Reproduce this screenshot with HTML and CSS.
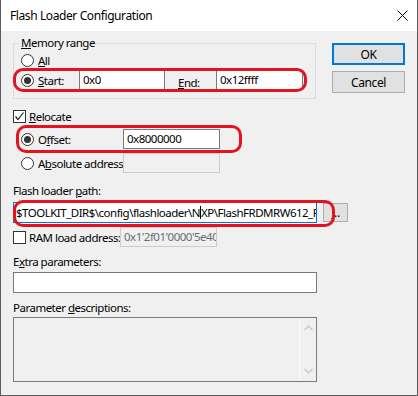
FILE: index.html
```html
<!DOCTYPE html>
<html lang="en">
<head>
    <meta charset="UTF-8">
    <title>Flash Loader Configuration</title>
    <link rel="stylesheet" href="styles.css">
</head>
<body>
    <div class="dialog">
        <div class="titlebar">
            <span class="title">Flash Loader Configuration</span>
            <svg class="close" width="11" height="11" viewBox="0 0 11 11">
                <path d="M0.5 0.5 L10.5 10.5 M10.5 0.5 L0.5 10.5" stroke="#000" stroke-width="1" fill="none"/>
            </svg>
        </div>

        <div class="content">
            <div class="top">
                <fieldset class="group">
                    <legend><u>M</u>emory range</legend>
                    <div class="row all-row">
                        <span class="radio"></span>
                        <span><u>A</u>ll</span>
                    </div>
                    <div class="row range-row mark">
                        <span class="opt start-opt"><span class="radio checked"></span><span><u>S</u>tart:</span></span>
                        <div class="field start-field">0x0</div>
                        <span class="end-label"><u>E</u>nd:</span>
                        <div class="field end-field">0x12ffff</div>
                    </div>
                </fieldset>
                <div class="side">
                    <button class="btn default">OK</button>
                    <button class="btn">Cancel</button>
                </div>
            </div>

            <div class="row check-row relocate-row">
                <span class="check checked">
                    <svg width="11" height="11" viewBox="0 0 11 11"><path d="M1.5 5.5 L4 8.5 L9.5 1.5" stroke="#222" stroke-width="1.2" fill="none"/></svg>
                </span>
                <span><u>R</u>elocate</span>
            </div>
            <div class="row sub-row offset-row mark">
                <span class="opt wide-opt"><span class="radio checked"></span><span>O<u>f</u>fset:</span></span>
                <div class="field">0x8000000</div>
            </div>
            <div class="row sub-row abs-row">
                <span class="opt wide-opt"><span class="radio"></span><span>A<u>b</u>solute address:</span></span>
                <div class="field disabled"></div>
            </div>

            <div class="label path-label">Flash loader <u>p</u>ath:</div>
            <div class="row path-row mark">
                <div class="field focus path-field">$TOOLKIT_DIR$\config\flashloader\N<span class="caret"></span>XP\FlashFRDMRW612_Flash</div>
                <button class="btn small"><u>.</u>..</button>
            </div>
            <div class="row ram-row">
                <span class="opt ram-opt">
                    <span class="check"></span>
                    <span>RAM load address:</span>
                </span>
                <div class="field disabled">0x1'2f01'0000'5e40</div>
            </div>

            <div class="label extra-label">E<u>x</u>tra parameters:</div>
            <div class="field full"></div>

            <div class="label desc-label">Parameter <u>d</u>escriptions:</div>
            <div class="memo">
                <div class="memo-text"></div>
                <div class="scroll">
                    <svg width="9" height="6" viewBox="0 0 9 6"><path d="M0.5 5 L4.5 1 L8.5 5" stroke="#c4c4c4" stroke-width="1.2" fill="none"/></svg>
                    <svg width="9" height="6" viewBox="0 0 9 6"><path d="M0.5 1 L4.5 5 L8.5 1" stroke="#c4c4c4" stroke-width="1.2" fill="none"/></svg>
                </div>
            </div>
        </div>
    </div>
</body>
</html>
```

FILE: styles.css
```css
*{
    margin: 0;
    padding: 0;
    box-sizing: border-box;
}
body{
    background-color: #ffffff;
    font-family: "Segoe UI", "Noto Sans", sans-serif;
    font-size: 11.5px;
    letter-spacing: -0.5px;
    white-space: nowrap;
    color: #000000;
}
.dialog{
    width: 418px;
    height: 396px;
    background-color: #f0f0f0;
    border: 1px solid #5c5c5c;
    border-top: none;
}
.titlebar{
    height: 31px;
    background-color: #ffffff;
    display: flex;
    align-items: center;
    justify-content: space-between;
    padding: 0 9px 0 9px;
    font-size: 12px;
    letter-spacing: -0.4px;
}
.content{
    padding: 4px 12px 0 12px;
}
.top{
    display: flex;
    align-items: flex-start;
}
.group{
    width: 303px;
    border: 1px solid #dcdcdc;
    padding: 0 0 6px 0;
}
.group legend{
    margin-left: 5px;
    padding: 0 2px;
    line-height: 16px;
}
.row{
    display: flex;
    align-items: center;
}
.all-row{
    height: 15px;
    margin-top: 2px;
    padding-left: 7px;
    gap: 4px;
}
.range-row{
    height: 24px;
    padding-left: 7px;
}
.opt{
    display: flex;
    align-items: center;
    gap: 4px;
}
.start-opt{
    width: 58px;
}
.wide-opt{
    width: 102px;
}
.radio{
    width: 13px;
    height: 13px;
    border: 1px solid #333333;
    border-radius: 50%;
    background-color: #ffffff;
    display: flex;
    align-items: center;
    justify-content: center;
    flex-shrink: 0;
}
.radio.checked::before{
    content: "";
    width: 7px;
    height: 7px;
    border-radius: 50%;
    background-color: #333333;
}
.check{
    width: 13px;
    height: 13px;
    border: 1px solid #333333;
    background-color: #ffffff;
    display: flex;
    align-items: center;
    justify-content: center;
    flex-shrink: 0;
}
.field{
    height: 20px;
    border: 1px solid #7a7a7a;
    background-color: #ffffff;
    padding: 0 3px;
    line-height: 18px;
    overflow: hidden;
    flex-shrink: 0;
}
.start-field{
    width: 86px;
}
.end-label{
    width: 51px;
    padding-left: 13px;
    padding-top: 4px;
    align-self: stretch;
    display: flex;
    align-items: center;
}
.end-field{
    width: 87px;
}
.field.disabled{
    border-color: #cccccc;
    background-color: #f0f0f0;
    color: #6d6d6d;
    width: 97px;
}
.field.focus{
    border-color: #0078d7;
}
.side{
    margin-left: 16px;
    margin-top: 8px;
    width: 73px;
    display: flex;
    flex-direction: column;
    gap: 6px;
}
.btn{
    font-family: inherit;
    font-size: 12px;
    letter-spacing: -0.4px;
    color: #000000;
    background-color: #e1e1e1;
    border: 1px solid #adadad;
    width: 73px;
    height: 22px;
}
.btn.default{
    border: 2px solid #0078d7;
}
.check-row{
    gap: 3px;
}
.relocate-row{
    margin-top: 10px;
    height: 15px;
}
.sub-row{
    width: 207px;
    height: 20px;
    padding-left: 8px;
}
.offset-row{
    margin-top: 5px;
}
.offset-row .field{
    width: 97px;
}
.abs-row{
    margin-top: 4px;
}
.label{
    height: 16px;
    line-height: 16px;
}
.path-label{
    margin-top: 10px;
}
.path-row{
    width: 335px;
    margin-top: 3px;
}
.path-field{
    width: 304px;
    height: 21px;
    line-height: 19px;
    padding: 0 2px;
}
.caret{
    display: inline-block;
    width: 1px;
    height: 13px;
    background-color: #000000;
    vertical-align: -2px;
}
.btn.small{
    width: 25px;
    height: 19px;
    margin-left: 6px;
    line-height: 14px;
    flex-shrink: 0;
}
.ram-row{
    margin-top: 4px;
    height: 20px;
}
.ram-opt{
    width: 107px;
    gap: 3px;
}
.extra-label{
    margin-top: 7px;
}
.field.full{
    margin-top: 2px;
    width: 304px;
    height: 21px;
}
.desc-label{
    margin-top: 7px;
}
.memo{
    margin-top: 1px;
    width: 304px;
    height: 65px;
    border: 1px solid #7a7a7a;
    display: flex;
}
.memo-text{
    flex: 1;
}
.scroll{
    width: 17px;
    border-left: 1px solid #fbfbfb;
    display: flex;
    flex-direction: column;
    justify-content: space-between;
    align-items: center;
    padding: 7px 0 7px 0;
}

/* red annotation frames drawn over the controls */
.mark{
    position: relative;
}
.mark::after{
    content: "";
    position: absolute;
    border: 3px solid #e3131f;
    border-radius: 10px;
    pointer-events: none;
}
.range-row::after{
    top: 0;
    bottom: 0;
    left: -1px;
    right: 8px;
}
.offset-row::after{
    top: -4px;
    bottom: -4px;
    left: 3px;
    right: -22px;
}
.path-row::after{
    top: -2px;
    bottom: -4px;
    left: 0;
    right: 13px;
}
```
